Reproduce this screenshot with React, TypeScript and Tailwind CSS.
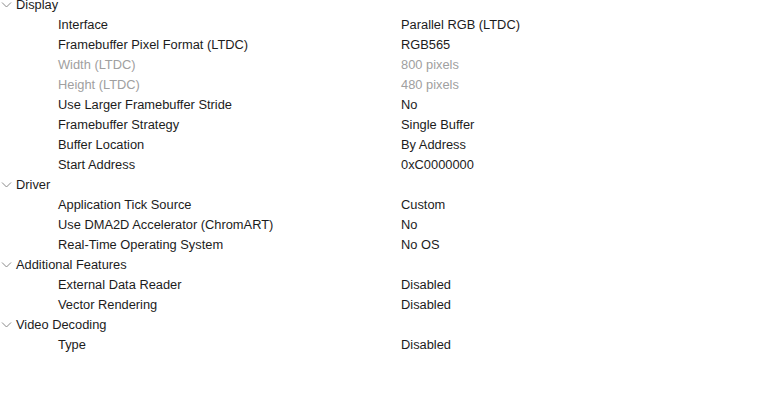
import React from 'react';

type Prop = { label: string; value: string; disabled?: boolean };
type Group = { title: string; props: Prop[] };

const groups: Group[] = [
  {
    title: 'Display',
    props: [
      { label: 'Interface', value: 'Parallel RGB (LTDC)' },
      { label: 'Framebuffer Pixel Format (LTDC)', value: 'RGB565' },
      { label: 'Width (LTDC)', value: '800 pixels', disabled: true },
      { label: 'Height (LTDC)', value: '480 pixels', disabled: true },
      { label: 'Use Larger Framebuffer Stride', value: 'No' },
      { label: 'Framebuffer Strategy', value: 'Single Buffer' },
      { label: 'Buffer Location', value: 'By Address' },
      { label: 'Start Address', value: '0xC0000000' },
    ],
  },
  {
    title: 'Driver',
    props: [
      { label: 'Application Tick Source', value: 'Custom' },
      { label: 'Use DMA2D Accelerator (ChromART)', value: 'No' },
      { label: 'Real-Time Operating System', value: 'No OS' },
    ],
  },
  {
    title: 'Additional Features',
    props: [
      { label: 'External Data Reader', value: 'Disabled' },
      { label: 'Vector Rendering', value: 'Disabled' },
    ],
  },
  {
    title: 'Video Decoding',
    props: [{ label: 'Type', value: 'Disabled' }],
  },
];

const Chevron = () => (
  <svg width="11" height="8" viewBox="0 0 11 8" className="shrink-0">
    <path d="M1 1.5 L5.5 6 L10 1.5" fill="none" stroke="#8a8a8a" strokeWidth="1" />
  </svg>
);

export default function App() {
  return (
    <div
      className="w-[784px] h-[419px] overflow-hidden bg-white text-[12.85px] text-[#1c1c1c]"
      style={{ fontFamily: '"Liberation Sans", Arial, sans-serif' }}
    >
      <div className="-mt-[5px]">
        {groups.map(g => (
          <div key={g.title}>
            <div className="h-5 flex items-center pl-[1px]">
              <Chevron />
              <span className="ml-[4px]">{g.title}</span>
            </div>
            {g.props.map(p => (
              <div
                key={p.label}
                className={`h-5 flex items-center ${p.disabled ? 'text-[#a0a0a0]' : ''}`}
              >
                <span className="w-[401px] pl-[58px] shrink-0">{p.label}</span>
                <span>{p.value}</span>
              </div>
            ))}
          </div>
        ))}
      </div>
    </div>
  );
}
